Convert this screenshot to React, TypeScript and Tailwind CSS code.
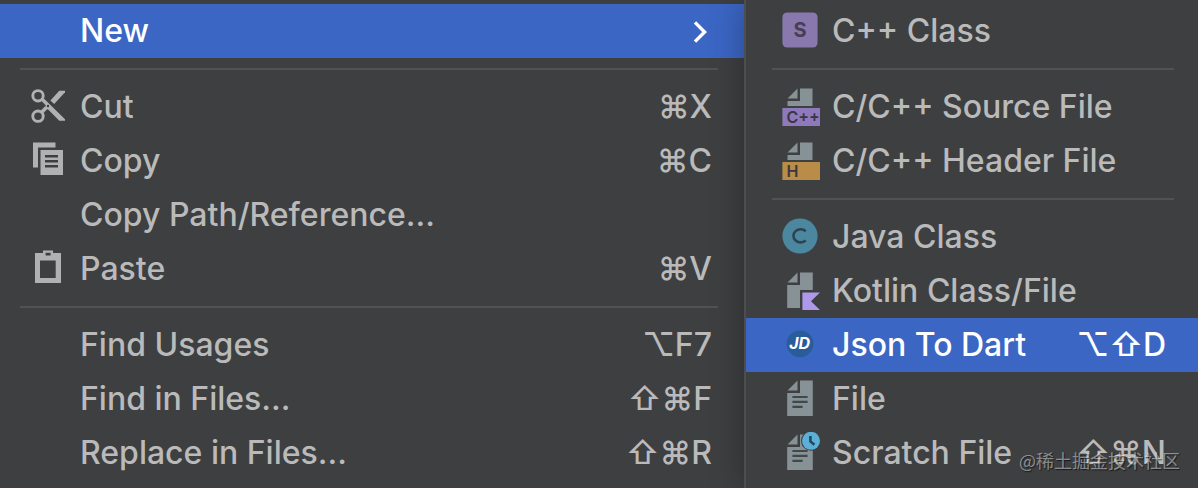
import clsx from 'clsx';
import type { ReactNode } from 'react';

type MenuRowProps = {
  label: string;
  icon?: ReactNode;
  shortcut?: string;
  hasSubmenu?: boolean;
  isActive?: boolean;
};

const CutIcon = () => (
  <svg className="size-10" viewBox="0 0 40 40" fill="#afb1b3" aria-hidden="true">
    <g fill="none" stroke="#afb1b3" strokeWidth="2.9">
      <circle cx="10" cy="9.8" r="5.2" />
      <circle cx="10" cy="30.2" r="5.2" />
      <path d="M13.4 26.4l5-5" strokeWidth="3.6" />
    </g>
    <path d="M31.3 4.7H37v1.5L26.2 18l-3.8-3.6z" />
    <path d="M14.6 11.2L37 33.2v1.5h-5.7L20.4 23.8l-3.2-1.8.6-2.6-5.4-5.6z" />
    <circle cx="20" cy="20" r="1.2" fill="#3d3f41" />
  </svg>
);

const CopyIcon = () => (
  <svg className="size-10" viewBox="0 0 40 40" fill="#afb1b3" aria-hidden="true">
    <path d="M5 2.5h22.5v5H10v20H5z" />
    <path d="M12.5 10H35v25H12.5zM17 15v2.4h13V15zm0 5v2.4h13V20zm0 5v2.4h13V25z" fillRule="evenodd" />
  </svg>
);

const PasteIcon = () => (
  <svg className="size-10" viewBox="0 0 40 40" fill="#afb1b3" aria-hidden="true">
    <path
      d="M7 5h8V2.4h10V5h8v30H7zM12 12.4V30h15.7V12.4zM17.6 4.8v2.8h5V4.8z"
      fillRule="evenodd"
    />
  </svg>
);

const CppClassIcon = () => (
  <svg className="size-10" viewBox="0 0 40 40" aria-hidden="true">
    <rect x="2.4" y="2.4" width="35.2" height="35.2" rx="5" fill="#8878ae" />
    <text x="20" y="27" textAnchor="middle" fontSize="20" fontWeight="700" fill="#453f56">
      S
    </text>
  </svg>
);

const CppFileIcon = ({ tag, color }: { tag: string; color: string }) => (
  <svg className="size-10" viewBox="0 0 40 40" aria-hidden="true">
    <path d="M17.5 2.5v10h-10zM20 2.5h12.5V20h-25v-5H20z" fill="#879296" />
    <rect x="2.4" y="22" width="37.6" height="18" fill={color} />
    <text x="6.5" y="37" fontSize="16" fontWeight="600" fill="#3b3742">
      {tag}
    </text>
  </svg>
);

const JavaClassIcon = () => (
  <svg className="size-10" viewBox="0 0 40 40" aria-hidden="true">
    <circle cx="20" cy="20" r="17.6" fill="#4b879f" />
    <path
      d="M25.8 15.2a7.2 6.6 0 1 0 0 9.2"
      fill="none"
      stroke="#2c4450"
      strokeWidth="2.6"
    />
  </svg>
);

const KotlinIcon = () => (
  <svg className="size-10" viewBox="0 0 40 40" aria-hidden="true">
    <path d="M17.5 2.5v10h-10zM20 2.5h12.8V20H20v18H7.2V15H20z" fill="#879296" />
    <path d="M22.4 22.4H40L31 31.2l9 8.8H22.4z" fill="#ae98ea" />
  </svg>
);

const JsonToDartIcon = () => (
  <svg className="size-10" viewBox="0 0 40 40" aria-hidden="true">
    <circle cx="20" cy="19.8" r="13.4" fill="#285d99" />
    <text
      x="19.6"
      y="25.4"
      textAnchor="middle"
      fontSize="16"
      fontWeight="700"
      fontStyle="italic"
      fill="#fff"
    >
      JD
    </text>
  </svg>
);

const FileIcon = () => (
  <svg className="size-10" viewBox="0 0 40 40" aria-hidden="true">
    <path d="M17.5 2.5v10h-10zM20 2.5h12.8V38H7.2V15H20z" fill="#879296" />
    <path d="M12.4 19h15.2M12.4 23.8h15.2M12.4 28.8h10.2" stroke="#41484b" strokeWidth="2.2" />
  </svg>
);

const ScratchFileIcon = () => (
  <svg className="size-10" viewBox="0 0 40 40" aria-hidden="true">
    <path d="M17.5 2.5v10h-10zM20 2.5h12.8V38H7.2V15H20z" fill="#879296" />
    <path d="M12.4 19h15.2M12.4 23.8h15.2M12.4 28.8h10.2" stroke="#41484b" strokeWidth="2.2" />
    <circle cx="31" cy="8.8" r="10" fill="#3d3f41" />
    <circle cx="31" cy="8.8" r="9" fill="#5cb0d8" />
    <path d="M30.4 4v5.4l4 3.4" fill="none" stroke="#26485a" strokeWidth="2.6" />
  </svg>
);

const MenuRow = ({ label, icon, shortcut, hasSubmenu, isActive }: MenuRowProps) => (
  <button
    className={clsx(
      'flex w-full items-start gap-3 py-1.5 pr-8 text-left text-[32px] leading-[42px] whitespace-nowrap',
      isActive ? 'bg-[#3b66c4] font-medium text-white' : 'font-[450] text-[#bababa]'
    )}
    type="button"
    role="menuitem"
  >
    <span className="size-10 shrink-0">{icon}</span>
    <span className="flex-1">{label}</span>
    {shortcut && <span>{shortcut}</span>}
    {hasSubmenu && (
      <svg className="h-10 w-5" viewBox="0 0 20 40" aria-hidden="true">
        <path d="M3 12.4L12.6 22 3 31.6" fill="none" stroke="#fff" strokeWidth="3.4" />
      </svg>
    )}
  </button>
);

const Separator = () => <hr className="my-2.5 border-t-2 border-[#505254]" />;

const App = () => {
  return (
    <div className="relative grid min-h-screen grid-cols-[744fr_454fr] overflow-hidden bg-[#3d3f41] font-['Inter',sans-serif]">
      <div className="py-1 [&>button]:pl-7 [&>hr]:ml-5 [&>hr]:mr-6.5" role="menu" aria-label="Edit">
        <MenuRow label="New" hasSubmenu isActive />
        <Separator />
        <MenuRow label="Cut" icon={<CutIcon />} shortcut="⌘X" />
        <MenuRow label="Copy" icon={<CopyIcon />} shortcut="⌘C" />
        <MenuRow label="Copy Path/Reference..." />
        <MenuRow label="Paste" icon={<PasteIcon />} shortcut="⌘V" />
        <Separator />
        <MenuRow label="Find Usages" shortcut="⌥F7" />
        <MenuRow label="Find in Files..." shortcut="⇧⌘F" />
        <MenuRow label="Replace in Files..." shortcut="⇧⌘R" />
      </div>

      <div
        className="relative border-l-2 border-[#4b4d4f] bg-[#3d3f41] py-1 shadow-[0_0_32px_rgba(0,0,0,0.3)] [&>button]:pl-8.5 [&>hr]:ml-6.5 [&>hr]:mr-6"
        role="menu"
        aria-label="New"
      >
        <MenuRow label="C++ Class" icon={<CppClassIcon />} />
        <Separator />
        <MenuRow label="C/C++ Source File" icon={<CppFileIcon tag="C++" color="#8d79bb" />} />
        <MenuRow label="C/C++ Header File" icon={<CppFileIcon tag="H" color="#b98d48" />} />
        <Separator />
        <MenuRow label="Java Class" icon={<JavaClassIcon />} />
        <MenuRow label="Kotlin Class/File" icon={<KotlinIcon />} />
        <MenuRow label="Json To Dart" icon={<JsonToDartIcon />} shortcut="⌥⇧D" isActive />
        <MenuRow label="File" icon={<FileIcon />} />
        <MenuRow label="Scratch File" icon={<ScratchFileIcon />} shortcut="⇧⌘N" />
      </div>

      <p className="pointer-events-none absolute right-4.5 bottom-3.5 font-['Noto_Sans_CJK_SC',sans-serif] text-lg leading-7 text-white/45 [text-shadow:1px_1px_1px_rgba(0,0,0,0.6)]">
        @稀土掘金技术社区
      </p>
    </div>
  );
};

export default App;
